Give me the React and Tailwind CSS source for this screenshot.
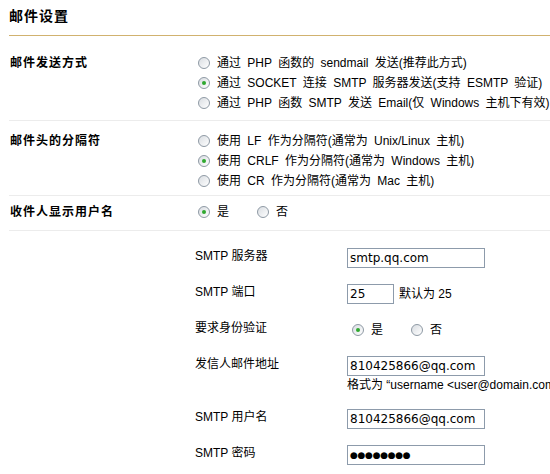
import React from "react";

// 单选框，仿 XP 风格
function Radio({ checked }) {
  return (
    <span className="inline-flex h-[12px] w-[12px] shrink-0 items-center justify-center rounded-full border border-[#8e99a4] bg-linear-to-br from-[#d9dde2] to-white">
      {checked && <span className="h-[4px] w-[4px] rounded-full bg-[#2fa82f]" />}
    </span>
  );
}

function Option({ checked, children }) {
  return (
    <div className="flex h-[20px] items-center whitespace-nowrap">
      <Radio checked={checked} />
      <span className="ml-[7px] [word-spacing:3px]">{children}</span>
    </div>
  );
}

function Field({ value, width = "w-[138px]" }) {
  return (
    <div
      className={`${width} flex h-[20px] shrink-0 items-center overflow-hidden border border-[#8d9bab] bg-white pl-[2px] font-['DejaVu_Sans',sans-serif] text-[12px] leading-[18px] whitespace-nowrap`}
    >
      {value}
    </div>
  );
}

export default function App() {
  return (
    <div className="h-[474px] w-[550px] overflow-hidden bg-white font-['Liberation_Sans','Noto_Sans_CJK_SC',sans-serif] text-[12px] text-black">
      <div className="pl-[9px]">
        {/* 标题 */}
        <h1 className="pt-[9px] pb-[11px] text-[14px] leading-[15px] font-bold tracking-[1px]">邮件设置</h1>
        <div className="h-[1px] bg-[#d1b26f]" />

        {/* 邮件发送方式 */}
        <div className="flex border-b border-[#ececec] pt-[17px] pb-[7px]">
          <div className="w-[189px] shrink-0 pl-[1px] leading-[20px] font-bold tracking-[1px]">邮件发送方式</div>
          <div className="flex flex-col">
            <Option>通过 PHP 函数的 sendmail 发送(推荐此方式)</Option>
            <Option checked>通过 SOCKET 连接 SMTP 服务器发送(支持 ESMTP 验证)</Option>
            <Option>通过 PHP 函数 SMTP 发送 Email(仅 Windows 主机下有效)</Option>
          </div>
        </div>

        {/* 邮件头的分隔符 */}
        <div className="flex border-b border-[#ececec] pt-[10px] pb-[4px]">
          <div className="w-[189px] shrink-0 pl-[1px] leading-[20px] font-bold tracking-[1px]">邮件头的分隔符</div>
          <div className="flex flex-col">
            <Option>使用 LF 作为分隔符(通常为 Unix/Linux 主机)</Option>
            <Option checked>使用 CRLF 作为分隔符(通常为 Windows 主机)</Option>
            <Option>使用 CR 作为分隔符(通常为 Mac 主机)</Option>
          </div>
        </div>

        {/* 收件人显示用户名 */}
        <div className="flex border-b border-[#ececec] pt-[6px] pb-[8px]">
          <div className="w-[189px] shrink-0 pl-[1px] leading-[20px] font-bold tracking-[1px]">收件人显示用户名</div>
          <div className="flex gap-[28px]">
            <Option checked>是</Option>
            <Option>否</Option>
          </div>
        </div>

        {/* SMTP 设置 */}
        <div className="flex flex-col gap-[16px] pt-[17px] pl-[186px]">
          <div className="flex">
            <div className="w-[152px] shrink-0 leading-[16px]">SMTP 服务器</div>
            <Field value="smtp.qq.com" />
          </div>
          <div className="flex">
            <div className="w-[152px] shrink-0 leading-[16px]">SMTP 端口</div>
            <Field value="25" width="w-[47px]" />
            <span className="ml-[5px] leading-[20px]">默认为 25</span>
          </div>
          <div className="flex">
            <div className="w-[152px] shrink-0 leading-[16px]">要求身份验证</div>
            <div className="flex gap-[28px] pl-[5px]">
              <Option checked>是</Option>
              <Option>否</Option>
            </div>
          </div>
          <div className="flex">
            <div className="w-[152px] shrink-0 leading-[16px]">发信人邮件地址</div>
            <div className="flex flex-col">
              <Field value="810425866@qq.com" />
              <div className="mt-[1px] leading-[16px] whitespace-nowrap">格式为 “username &lt;user@domain.com&gt;”</div>
            </div>
          </div>
          <div className="flex">
            <div className="w-[152px] shrink-0 leading-[16px]">SMTP 用户名</div>
            <Field value="810425866@qq.com" />
          </div>
          <div className="flex">
            <div className="w-[152px] shrink-0 leading-[16px]">SMTP 密码</div>
            <Field value={<span className="text-[9px] tracking-[-0.3px]">●●●●●●●●</span>} />
          </div>
        </div>
      </div>
    </div>
  );
}
